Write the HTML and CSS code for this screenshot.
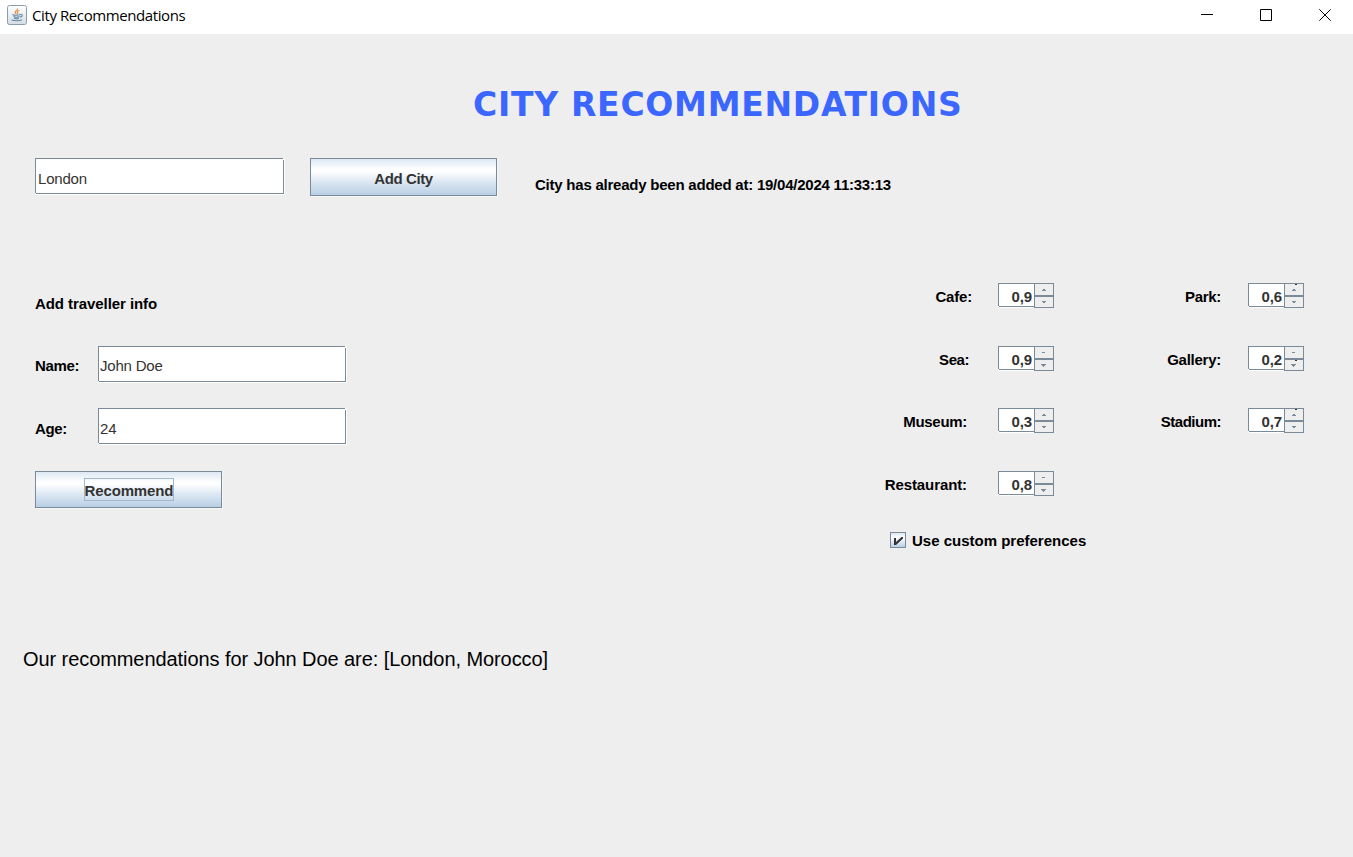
FILE: index.html
```html
<!DOCTYPE html>
<html lang="en">
<head>
<meta charset="utf-8">
<title>City Recommendations</title>
<link rel="stylesheet" href="styles.css">
</head>
<body>
<svg width="0" height="0" class="defs" aria-hidden="true">
  <symbol id="up-wide" viewBox="0 0 18 11"><path d="M8 5h2v1h1v1H7V6h1z"/></symbol>
  <symbol id="up-thin" viewBox="0 0 18 11"><path d="M7 5h3v1H7z"/></symbol>
  <symbol id="down-wide" viewBox="0 0 18 10"><path d="M7 4h4v1h-1v1H8V5H7z"/></symbol>
  <symbol id="down-tall" viewBox="0 0 18 10"><path d="M6 4h5v1h-1v1H9v1H8V6H7V5H6z"/></symbol>
</svg>
<header class="titlebar">
  <svg class="app-icon" width="20" height="20" viewBox="0 0 20 20">
    <defs><linearGradient id="tile" x2="0" y2="1"><stop stop-color="#fff"/><stop offset="1" stop-color="#d5dde3"/></linearGradient></defs>
    <rect x=".5" y=".5" width="19" height="19" rx="2" fill="url(#tile)" stroke="#8c9cab"/>
    <path d="M10.500 3.500c.7 2-3 2.500-2.300 4 .2 1 1.200 1 1.100 1.900M12.300 5.500c-2 .7-2.400 1.300-1.600 2.100.5.7.1 1.200-.3 1.600" fill="none" stroke="#e39045" stroke-width="1.200"/>
    <path d="M5.500 9.500c1 1 6.500.8 8 .1M6.500 11.500c1.500.8 4.500.8 6 0M7 13.200c1.500.7 3.700.7 5 0M4.500 14.800c2 1.300 8.500 1.200 10.500 0M13.500 9.500c2.500-.5 2.400 2-.4 2.600" fill="none" stroke="#6389a9" stroke-width="1.100"/>
  </svg>
  <span class="window-title">City Recommendations</span>
  <div class="window-controls">
    <svg width="12" height="12" viewBox="0 0 12 12"><path d="M0 5.500h12"/></svg>
    <svg width="12" height="12" viewBox="0 0 12 12"><path d="M.5.5h11v11H.5z"/></svg>
    <svg width="12" height="12" viewBox="0 0 12 12"><path d="M.3.3l11.400 11.400M11.700.3L.3 11.700"/></svg>
  </div>
</header>
<main class="content">
  <h1 class="heading">CITY RECOMMENDATIONS</h1>
  <section class="city-row">
    <div class="field city-field"><span>London</span></div>
    <button class="button add-button"><span class="add-text">Add City</span></button>
    <span class="status">City has already been added at: 19/04/2024 11:33:13</span>
  </section>
  <div class="columns">
    <section class="traveller">
      <h2 class="subheading">Add traveller info</h2>
      <div class="form-row name-row"><label>Name:</label><div class="field"><span>John Doe</span></div></div>
      <div class="form-row age-row"><label>Age:</label><div class="field"><span>24</span></div></div>
      <button class="button recommend-button"><span class="focused">Recommend</span></button>
    </section>
    <section class="preferences">
      <div class="pref-grid">
        <label class="cafe">Cafe:</label>
        <div class="spinner"><span class="value">0,9</span><span class="steps"><svg><use href="#up-wide"/></svg><svg><use href="#down-wide"/></svg></span></div>
        <label class="park">Park:</label>
        <div class="spinner"><span class="value">0,6</span><span class="steps"><svg><use href="#up-wide"/><path class="tick" d="M10 0h2v1h-2z"/></svg><svg><use href="#down-wide"/></svg></span></div>
        <label class="sea">Sea:</label>
        <div class="spinner short"><span class="value">0,9</span><span class="steps"><svg><use href="#up-thin"/></svg><svg><use href="#down-tall"/></svg></span></div>
        <label class="gallery">Gallery:</label>
        <div class="spinner short"><span class="value">0,2</span><span class="steps"><svg><use href="#up-thin"/></svg><svg><use href="#down-tall"/><path class="tick" d="M10 0h2v1h-2z"/></svg></span></div>
        <label class="museum">Museum:</label>
        <div class="spinner"><span class="value">0,3</span><span class="steps"><svg><use href="#up-wide"/></svg><svg><use href="#down-wide"/></svg></span></div>
        <label class="stadium">Stadium:</label>
        <div class="spinner"><span class="value">0,7</span><span class="steps"><svg><use href="#up-wide"/><path class="tick" d="M10 0h2v1h-2z"/></svg><svg><use href="#down-wide"/></svg></span></div>
        <label class="restaurant">Restaurant:</label>
        <div class="spinner short"><span class="value">0,8</span><span class="steps"><svg><use href="#up-thin"/></svg><svg><use href="#down-tall"/></svg></span></div>
      </div>
      <div class="custom">
        <svg class="checkbox" width="16" height="16" viewBox="0 0 14 14"><path d="M3 5h2v4l5.500-5H12v1.500L5 12H3z"/></svg>
        <span>Use custom preferences</span>
      </div>
    </section>
  </div>
  <p class="result">Our recommendations for John Doe are: [London, Morocco]</p>
</main>
</body>
</html>
```
FILE: styles.css
```css
* { box-sizing: border-box; }
body {
  margin: 0;
  height: 857px;
  overflow: hidden;
  background: #eee;
  color: #000;
  font: bold 15px/18px "Liberation Sans", Arial, sans-serif;
}
.defs { display: none; }
.titlebar {
  display: flex;
  height: 34px;
  padding: 5px 22px 0 7px;
  background: #fff;
}
.window-title {
  margin: 0 0 0 5px;
  font: 15px/20px "Open Sans", "Noto Sans", sans-serif;
  letter-spacing: -0.4px;
}
.window-controls {
  display: flex;
  gap: 47px;
  margin: 4px 0 0 auto;
}
.window-controls path { fill: none; stroke: #000; }
.heading {
  margin: 0;
  padding: 51px 0 0 473px;
  height: 124px;
  color: #3b66ff;
  font: bold 33px/40px "DejaVu Sans", Verdana, sans-serif;
  letter-spacing: 0.72px;
  white-space: nowrap;
}
.city-row { display: flex; padding-left: 35px; height: 38px; }
.field {
  position: relative;
  width: 248px;
  height: 36px;
  padding: 10px 0 0 1px;
  border: 1px solid #7a8a99;
  background: #fff;
  box-shadow: 1px 1px 0 #fff;
  color: #333;
  font-weight: normal;
  letter-spacing: -0.2px;
}
.city-field { width: 249px; padding: 11px 0 0 2px; }
/* open corners of the etched border */
.field::before, .field::after {
  content: "";
  position: absolute;
  width: 1px;
  height: 2px;
  background: #fff;
}
.field::before { top: -1px; right: -1px; }
.field::after { bottom: -1px; left: -1px; height: 1px; }
.button {
  display: flex;
  justify-content: center;
  width: 187px;
  padding: 0;
  border: 1px solid #7a8a99;
  background: linear-gradient(#dde8f3 0, #fff 30%, #fff 34%, #dce7f2 64%, #b8cfe5 100%);
  box-shadow: 1px 1px 0 #f6f6f6;
  color: #333;
  font: inherit;
}
.add-button { height: 38px; margin-left: 26px; padding-top: 11px; }
.add-text { letter-spacing: -0.4px; }
.status { margin: 18px 0 0 38px; letter-spacing: -0.23px; }
.columns { display: flex; justify-content: space-between; padding: 87px 49px 0 35px; }
.subheading { margin: 0; padding-top: 12px; height: 63px; font: inherit; letter-spacing: -0.07px; }
.form-row { display: flex; height: 62px; }
.form-row label { width: 63px; padding-top: 11px; letter-spacing: -0.35px; }
.age-row { height: 63px; }
.age-row label { padding-top: 12px; }
.age-row .field { padding-top: 11px; }
.recommend-button { height: 37px; padding-top: 6px; }
.focused { width: 90px; height: 23px; padding: 3px 0 0; border: 1px solid #a3b8cc; letter-spacing: -0.13px; }
.preferences { width: 419px; }
.pref-grid {
  display: grid;
  grid-template-columns: 114px 56px 194px 56px;
  grid-template-rows: 63px 62px 63px 61px;
  margin-left: -1px;
}
.pref-grid label { padding: 5px 27px 0 0; text-align: right; white-space: nowrap; }
.pref-grid .cafe { padding-right: 26px; letter-spacing: -0.2px; }
.pref-grid .sea { padding-right: 29px; letter-spacing: -0.45px; }
.pref-grid .museum, .pref-grid .restaurant { padding-right: 31px; }
.museum { letter-spacing: -0.3px; }
.restaurant { letter-spacing: -0.1px; }
.park { letter-spacing: -0.3px; }
.gallery { letter-spacing: -0.25px; }
.stadium { letter-spacing: -0.5px; }
.spinner { display: flex; width: 56px; height: 25px; }
.value {
  position: relative;
  width: 36px;
  height: 24px;
  padding: 4px 2px 0 0;
  border: solid #7a8a99;
  border-width: 1px 0 1px 1px;
  background: #fff;
  box-shadow: 1px 1px 0 #fff;
  color: #333;
  text-align: right;
  letter-spacing: -0.1px;
}
.value::after {
  content: "";
  position: absolute;
  left: -1px;
  bottom: -1px;
  width: 1px;
  height: 1px;
  background: #fff;
}
.steps { display: flex; flex-direction: column; width: 20px; background: #eee; z-index: 1; }
.steps svg { display: block; width: 20px; height: 13px; border: 1px solid #7a8a99; fill: #7a8a99; }
.steps svg + svg { height: 12px; }
.steps .tick { fill: #333; }
.custom { display: flex; gap: 6px; margin-left: 5px; height: 18px; }
.checkbox { border: 1px solid #7a8a99; background: linear-gradient(#dde8f3, #fff 35%, #b8cfe5); fill: #333; }
.result { margin: 0; padding: 97px 0 0 23px; font: 20px/24px "Liberation Sans", Arial, sans-serif; letter-spacing: -0.075px; }
```
